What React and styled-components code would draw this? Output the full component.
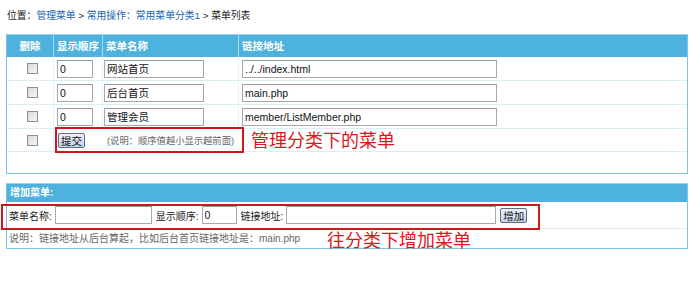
import React from "react";
import styled, { createGlobalStyle } from "styled-components";

const Global = createGlobalStyle`
  html, body { margin: 0; padding: 0; background: #fff; }
  body {
    font-family: "Liberation Sans", Arial, "Noto Sans CJK SC", sans-serif;
    font-size: 10px;
    color: #222;
  }
  * { box-sizing: border-box; }
`;

const Page = styled.div`
  width: 694px;
  padding: 9px 0 0 6px;
`;

const Crumb = styled.div`
  height: 14px;
  line-height: 14px;
  padding-left: 1px;
  margin-bottom: 11px;
  color: #222;
  font-size: 9.8px;
  white-space: nowrap;
`;

const CrumbLink = styled.a`
  color: #1765b0;
  text-decoration: none;
`;

const Panel = styled.div`
  position: relative;
  width: 682px;
  border: 1px solid #7cc4e3;
  border-top-color: #9ed5ee;
  margin-bottom: ${(p) => p.$mb || 0}px;
`;

const Grid = styled.div`
  display: grid;
  grid-template-columns: 46px 49px 136px 1fr;
`;

const HeadCell = styled.div`
  height: 22px;
  line-height: 22px;
  background: #4db2dd;
  color: #fff;
  font-weight: bold;
  font-size: 10.5px;
  padding-left: ${(p) => p.$pl ?? 3}px;
  text-align: ${(p) => (p.$center ? "center" : "left")};
  border-left: ${(p) => (p.$first ? "none" : "1px solid #a9dbf0")};
`;

const Cell = styled.div`
  height: ${(p) => p.$h || 24}px;
  display: flex;
  align-items: center;
  justify-content: ${(p) => (p.$center ? "center" : "flex-start")};
  padding-left: ${(p) => p.$pl ?? 0}px;
  border-bottom: ${(p) => (p.$last ? "none" : "1px solid #dcedf6")};
  border-left: ${(p) => (p.$first ? "none" : "1px solid #e3f1f8")};
  grid-column: ${(p) => p.$span || "auto"};
`;

const Check = styled.input.attrs({ type: "checkbox" })`
  appearance: none;
  margin: 0 0 0 5px;
  width: 11px;
  height: 11px;
  border: 1px solid #8a8f96;
  background: linear-gradient(135deg, #d6d8db, #f7f7f7);
`;

const Field = styled.input`
  width: ${(p) => p.$w}px;
  height: 18px;
  border: 1px solid #a8a8ab;
  border-top-color: #9a9a9e;
  padding: 0 2px;
  font-family: "Liberation Sans", Arial, "Noto Sans CJK SC", sans-serif;
  font-size: 10.5px;
  color: #111;
  outline: none;
  background: #fff;
`;

const Btn = styled.button`
  height: 15px;
  padding: 0 2px;
  border: 1px solid #5d6c86;
  border-radius: 2px;
  background: linear-gradient(#eef3fb, #c4d1e6);
  font-family: "Noto Sans CJK SC", sans-serif;
  font-size: 10.5px;
  line-height: 13px;
  color: #111;
  margin-left: ${(p) => p.$ml || 0}px;
`;

const Note = styled.span`
  color: #666;
  font-size: 9.3px;
  margin-left: ${(p) => p.$ml || 0}px;
  white-space: nowrap;
`;

const RedBox = styled.div`
  position: absolute;
  left: ${(p) => p.$x}px;
  top: ${(p) => p.$y}px;
  width: ${(p) => p.$w}px;
  height: ${(p) => p.$h}px;
  border: 2px solid #d0161b;
  pointer-events: none;
`;

const RedText = styled.div`
  position: absolute;
  left: ${(p) => p.$x}px;
  top: ${(p) => p.$y}px;
  font-family: "Noto Sans CJK SC", sans-serif;
  font-size: 18px;
  line-height: 18px;
  color: #e0141a;
  white-space: nowrap;
`;

const AddHead = styled.div`
  height: 18px;
  line-height: 18px;
  background: #4db2dd;
  color: #fff;
  font-weight: bold;
  padding-left: 3px;
`;

const AddRow = styled.div`
  height: 27px;
  display: flex;
  align-items: center;
  gap: 3px;
  padding-left: 2px;
  border-bottom: 1px solid #dcedf6;
`;

const Label = styled.span`
  white-space: nowrap;
  margin-left: ${(p) => p.$ml || 0}px;
`;

const InfoRow = styled.div`
  height: 19px;
  line-height: 19px;
  padding-left: 2px;
  color: #666;
`;

const rows = [
  { name: "网站首页", url: "../../index.html" },
  { name: "后台首页", url: "main.php" },
  { name: "管理会员", url: "member/ListMember.php" },
];

export default function App() {
  return (
    <Page>
      <Global />
      <Crumb>
        位置：<CrumbLink href="#">管理菜单</CrumbLink> &gt;{" "}
        <CrumbLink href="#">常用操作：常用菜单分类1</CrumbLink> &gt; 菜单列表
      </Crumb>

      <Panel $mb={9}>
        <Grid>
          <HeadCell $first $center $pl={0}>删除</HeadCell>
          <HeadCell>显示顺序</HeadCell>
          <HeadCell>菜单名称</HeadCell>
          <HeadCell>链接地址</HeadCell>
          {rows.map((r) => (
            <React.Fragment key={r.name}>
              <Cell $first $center>
                <Check />
              </Cell>
              <Cell $pl={3}>
                <Field $w={36} defaultValue="0" />
              </Cell>
              <Cell $pl={1}>
                <Field $w={100} defaultValue={r.name} />
              </Cell>
              <Cell $pl={3}>
                <Field $w={255} defaultValue={r.url} />
              </Cell>
            </React.Fragment>
          ))}
          <Cell $first $center $h={23}>
            <Check />
          </Cell>
          <Cell $span="2 / 5" $pl={4} $h={23}>
            <Btn>提交</Btn>
            <Note $ml={22}>(说明：顺序值越小显示越前面)</Note>
          </Cell>
          <Cell $first $last $h={21} $span="1 / 5" />
        </Grid>
        <RedBox $x={48} $y={92} $w={189} $h={26} />
        <RedText $x={244} $y={95}>管理分类下的菜单</RedText>
      </Panel>

      <Panel>
        <AddHead>增加菜单:</AddHead>
        <AddRow>
          <Label>菜单名称:</Label>
          <Field $w={97} />
          <Label $ml={1}>显示顺序:</Label>
          <Field $w={35} defaultValue="0" />
          <Label $ml={1}>链接地址:</Label>
          <Field $w={210} />
          <Btn $ml={1}>增加</Btn>
        </AddRow>
        <InfoRow>说明：链接地址从后台算起，比如后台首页链接地址是：main.php</InfoRow>
        <RedBox $x={-6} $y={20} $w={539} $h={26} />
        <RedText $x={320} $y={46}>往分类下增加菜单</RedText>
      </Panel>
    </Page>
  );
}
